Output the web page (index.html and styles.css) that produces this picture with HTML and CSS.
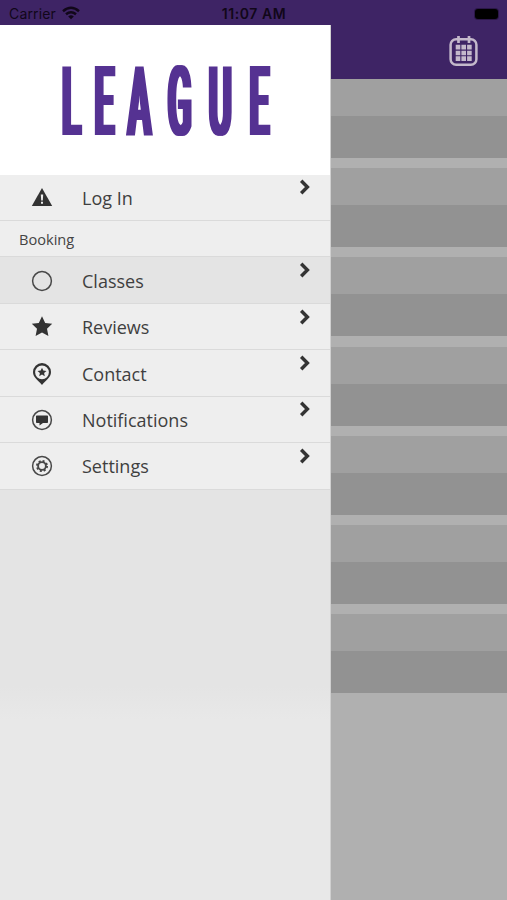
FILE: index.html
```
<!DOCTYPE html>
<html lang="en">
<head>
<meta charset="utf-8">
<title>League</title>
<link rel="stylesheet" href="styles.css">
</head>
<body>
<header class="status">
  <div class="carrier"><span>Carrier</span>
    <svg width="18" height="14" viewBox="0 0 18 14" fill="none" stroke="currentColor" stroke-width="2.5"><path d="M1 5.2Q9-1.6 17 5.2M4 8.3q5-4.2 10 0"/><path d="M6.2 10.4Q9 8.2 11.8 10.4L9 13.3z" fill="currentColor" stroke="none"/></svg>
  </div>
  <time class="clock">11:07 AM</time>
  <span class="battery"></span>
</header>
<div class="layout">
  <aside class="drawer">
    <div class="brand">
      <svg width="331" height="149" viewBox="0 0 331 149"><filter id="widen"><feMorphology operator="dilate" radius="2 0"/></filter><g filter="url(#widen)"><text class="wordmark" transform="translate(0 109.5) scale(.36 1)" x="172 262.5 354.7 466 580 693">LEAGUE</text></g></svg>
    </div>
    <nav class="menu">
      <a class="item login"><svg class="icon" viewBox="0 0 22 22"><path d="M11 1 21.200 19H.8z" fill="currentColor"/><path d="M9.800 7.500h2.400l-.4 6h-1.600zM10 14.700h2v2h-2z" fill="#eee"/></svg><span>Log In</span><svg class="chevron" viewBox="0 0 12 16"><path d="m2.200 1.800 6.200 6.200-6.200 6.200"/></svg></a>
      <h2 class="section">Booking</h2>
      <a class="item active"><svg class="icon" viewBox="0 0 22 22"><circle class="ring" cx="11" cy="11" r="9.400"/></svg><span>Classes</span><svg class="chevron" viewBox="0 0 12 16"><path d="m2.200 1.800 6.200 6.200-6.200 6.200"/></svg></a>
      <a class="item"><svg class="icon" viewBox="0 0 22 22"><path d="m11 .3 3.200 6.700 7 .8-5.200 5 1.400 7.200L11 16.500 4.600 20 6 12.800l-5.200-5 7-.8z" fill="currentColor"/></svg><span>Reviews</span><svg class="chevron" viewBox="0 0 12 16"><path d="m2.200 1.800 6.200 6.200-6.200 6.200"/></svg></a>
      <a class="item"><svg class="icon" viewBox="0 0 22 22"><path d="M11 .1A9 9 0 0 0 2 9.100C2 14.400 7.200 17.600 11 22c3.800-4.400 9-7.600 9-12.900A9 9 0 0 0 11 .1zm0 2.300a6.900 6.900 0 1 1 0 13.800 6.900 6.900 0 0 1 0-13.800z" fill="currentColor" fill-rule="evenodd"/><path d="m11 4.700 1.300 2.900 3.200.3-2.400 2.100.7 3.200-2.800-1.700-2.800 1.700.7-3.200-2.400-2.100 3.200-.3z" fill="currentColor"/></svg><span>Contact</span><svg class="chevron" viewBox="0 0 12 16"><path d="m2.200 1.800 6.200 6.200-6.200 6.200"/></svg></a>
      <a class="item"><svg class="icon" viewBox="0 0 22 22"><circle class="ring" cx="11" cy="11" r="9.400"/><path d="M5.800 6.500h10.400q.8 0 .8.800v6q0 .8-.8.800h-4.200l-3.500 2.500v-2.500H5.800q-.8 0-.8-.8v-6q0-.8.8-.8z" fill="currentColor"/></svg><span>Notifications</span><svg class="chevron" viewBox="0 0 12 16"><path d="m2.200 1.800 6.200 6.200-6.200 6.200"/></svg></a>
      <a class="item"><svg class="icon" viewBox="0 0 22 22"><circle class="ring" cx="11" cy="11" r="9.400"/><circle class="ring gear" cx="11" cy="11" r="3.900"/><circle class="teeth" cx="11" cy="11" r="5.100"/></svg><span>Settings</span><svg class="chevron" viewBox="0 0 12 16"><path d="m2.200 1.800 6.200 6.200-6.200 6.200"/></svg></a>
    </nav>
    <div class="shade"></div>
  </aside>
  <main class="content">
    <div class="toolbar">
      <svg width="29" height="31" viewBox="0 0 29 31" fill="none" stroke="currentColor"><rect x="1.600" y="3.300" width="25.800" height="25.500" rx="5.500" stroke-width="2.500"/><path d="M9.500 0v7M20 0v7" stroke-width="2.700"/><path d="M6.700 11.200h16M6.700 17h16M6.700 22.600h16" stroke-width="4.700" stroke-dasharray="4.600 1.100"/></svg>
    </div>
    <div class="cards">
      <div class="card"></div><div class="card"></div><div class="card"></div><div class="card"></div><div class="card"></div><div class="card"></div><div class="card"></div>
    </div>
  </main>
</div>
</body>
</html>
```
FILE: styles.css
```
* { box-sizing: border-box; }
body { margin: 0; height: 900px; overflow: hidden; background: #b0b0b0; font-family: "Open Sans", sans-serif; color: #333; }
.status { height: 25px; padding: 2px 9px 0; background: #3e2465; color: #110719; display: grid; grid-template-columns: 1fr auto 1fr; align-items: center; font: 14px/20px Inter, sans-serif; }
.carrier { display: flex; align-items: center; gap: 6px; letter-spacing: .15px; }
.carrier svg { margin-top: -2px; }
.clock { font-weight: 600; letter-spacing: .55px; margin-left: 1px; }
.battery { justify-self: end; width: 23px; height: 10px; border-radius: 3px; background: #000; box-shadow: 0 0 0 1px #2b1748; }
.layout { display: grid; grid-template-columns: 331px 1fr; height: 875px; }
.drawer { display: flex; flex-direction: column; background: #e8e8e8; border-right: 1px solid #d0d0d0; }
.brand { height: 149.5px; background: #fff; overflow: hidden; }
.brand svg { display: block; }
.wordmark { font-family: Roboto, sans-serif; font-weight: 600; font-size: 97px; fill: #553092; }
.item { display: flex; align-items: center; height: 46.4px; padding: 1px 0 0 31px; gap: 29px; background: #eee; border-bottom: 1px solid #dadada; font-size: 18px; line-height: 24px; color: #3f3f3f; }
.item.login { height: 46px; }
.item.active { background: #e4e4e4; height: 47px; }
.icon { width: 22px; height: 22px; color: #333; flex: none; }
.ring { fill: none; stroke: #484848; stroke-width: 1.5; }
.ring.gear { stroke-width: 1.9; }
.teeth { fill: none; stroke: #444; stroke-width: 1.8; stroke-dasharray: 2 2.005; }
.chevron { width: 12px; height: 16px; margin: -21px 19px 0 auto; fill: none; stroke: #333; stroke-width: 3.4; }
.section { margin: 0; height: 36.5px; padding-left: 19px; background: #eee; border-bottom: 1px solid #dadada; font-size: 14.6px; font-weight: 400; line-height: 37px; color: #444; }
.shade { height: 230px; background: linear-gradient(#e4e4e4 85%, #e8e8e8); }
.toolbar { height: 54px; background: #3e2465; color: #c4b9cb; display: flex; justify-content: flex-end; padding: 11px 29px 0 0; }
.cards { display: grid; gap: 10.2px; }
.card { height: 79px; background: linear-gradient(#a0a0a0 37px, #929292 37px); }
```
